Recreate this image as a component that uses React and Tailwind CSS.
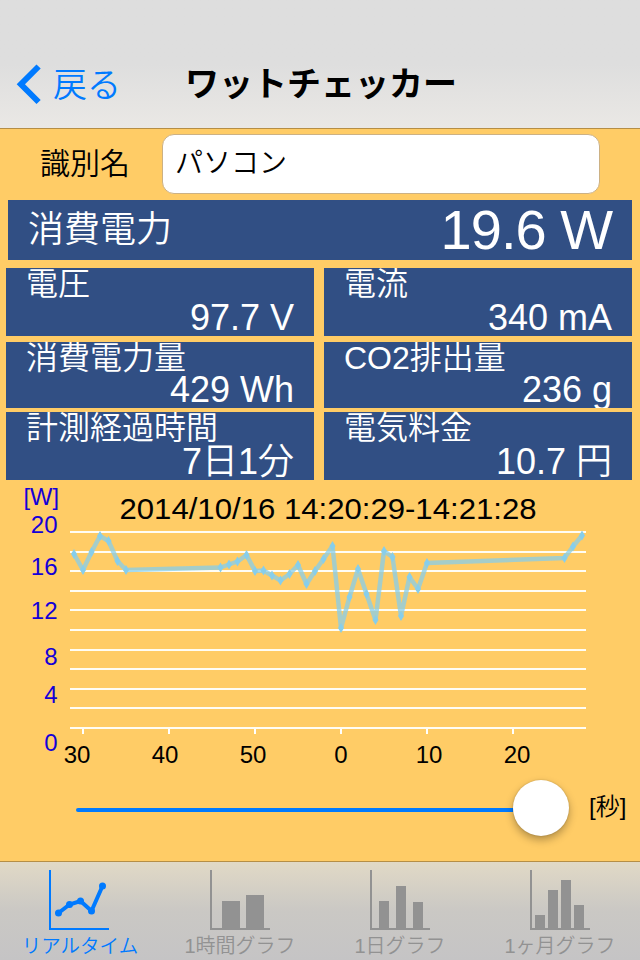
const readings = [
  [74, 554], [83, 570], [91.5, 552], [100, 536], [108.5, 541], [117.5, 561], [126, 570],
  [220.5, 567.5], [229, 564.5], [237.5, 561.5], [246.5, 555], [255, 571], [263.5, 570.5],
  [272, 575.5], [280.5, 580.5], [289.5, 574], [298, 565], [306.5, 584], [315, 571],
  [323.5, 559], [332.5, 546], [341, 628], [349.5, 597], [358, 569], [366.5, 594],
  [375.5, 620], [384, 551], [392.5, 557], [401, 616], [409.5, 577], [418, 589],
  [427, 563], [564.5, 558], [573, 546.5], [582, 535.5],
];

const yLabels = [['20', 533], ['16', 575], ['12', 619], ['8', 665], ['4', 703], ['0', 751]];
const xLabels = [['30', 77, 83], ['40', 165, 169], ['50', 253, 255], ['0', 341, 341], ['10', 429, 427], ['20', 517, 513]];

const metrics = [
  { label: '電圧', value: '97.7 V', box: 'h-[68px]' },
  { label: '電流', value: '340 mA', box: 'h-[68px]' },
  { label: '消費電力量', value: '429 Wh', box: 'h-[66px]', tight: true },
  { label: 'CO2排出量', value: '236 g', box: 'h-[66px] overflow-hidden', tight: true },
  { label: '計測経過時間', value: '7日1分', box: 'h-[68px]' },
  { label: '電気料金', value: '10.7 円', box: 'h-[68px]' },
];

const tabs = [
  { label: '1時間グラフ', bars: [[12, 31, 18], [36, 25, 18]] },
  { label: '1日グラフ', bars: [[9, 31, 10], [26, 16, 10], [43, 32, 10]] },
  { label: '1ヶ月グラフ', bars: [[5, 45, 10], [18, 20, 10], [31, 10, 10], [44, 35, 10]] },
];

function Metric({ label, value, box, tight }) {
  return (
    <div className={`${box} bg-[#314f84] px-[20px] text-white`}>
      <div className={`${tight ? 'h-[30px]' : 'h-8'} text-[32px] leading-[33px] font-[350] whitespace-nowrap`}>{label}</div>
      <div className="h-9 text-right text-[36px] leading-9 font-[350] whitespace-nowrap">{value}</div>
    </div>
  );
}

function PowerChart() {
  const points = readings.map((p) => p.join(',')).join(' ');
  return (
    <svg className="block h-[294px] w-full shrink-0" viewBox="0 480 640 294">
      <text x="23.500" y="505" fontSize="24" textLength="35.500" lengthAdjust="spacingAndGlyphs" fill="#1400d8">[W]</text>
      <text x="119.500" y="519" fontSize="30" textLength="417" lengthAdjust="spacingAndGlyphs" fill="#000">
        2014/10/16 14:20:29-14:21:28
      </text>
      {Array.from({ length: 11 }, (_, i) => (
        <rect key={i} x="70" y={531 + Math.round(i * 19.6)} width="516" height="2" fill="#fffdf5" />
      ))}
      {xLabels.map(([text, x, tick]) => (
        <g key={tick}>
          <rect x={tick - 1} y="729" width="2" height="5" fill="#fff" />
          <text x={x} y="763" fontSize="24" textAnchor="middle" fill="#000">{text}</text>
        </g>
      ))}
      {yLabels.map(([text, y]) => (
        <text key={text} x="57.500" y={y} fontSize="24" textAnchor="end" fill="#1400d8">{text}</text>
      ))}
      <polyline points={points} fill="none" stroke="#87ceeb" strokeOpacity="0.75" strokeWidth="4.500" strokeLinejoin="bevel" />
      {readings.map(([x, y]) => (
        <path key={x} d={`M${x} ${y - 5} L${x + 3} ${y} L${x} ${y + 5} L${x - 3} ${y} Z`} fill="#87ceeb" />
      ))}
    </svg>
  );
}

export default function App() {
  return (
    <div className="flex h-[960px] w-[640px] flex-col overflow-hidden bg-[#ffcc66] font-['Liberation_Sans','Noto_Sans_CJK_JP',sans-serif]">
      <header className="grid h-[129px] shrink-0 grid-cols-[185px_1fr_185px] border-b border-[#b58e46] bg-linear-to-b from-[#dedede] from-50% to-[#eae8e5] pt-[40px]">
        <button className="flex items-center pl-[16px] text-[#007aff]">
          <svg className="h-[42px] w-[26px]" viewBox="0 0 26 42">
            <path d="M0.700 21.300 L20.500 1.500 L24.700 5.500 L9 21.300 L24.700 37 L20.500 41 Z" fill="currentColor" />
          </svg>
          <span className="ml-[11px] pt-[2px] text-[34px] leading-[40px] font-[350] whitespace-nowrap">戻る</span>
        </button>
        <h1 className="text-center text-[34px] leading-[88px] font-bold whitespace-nowrap">ワットチェッカー</h1>
      </header>

      <div className="flex h-[71px] shrink-0 pt-[5px]">
        <label className="w-[162px] shrink-0 pl-[40px] text-[30px] leading-[59px] font-[350]">識別名</label>
        <div className="h-[60px] w-[438px] rounded-xl border border-[#ccb184] bg-white pl-[12px] text-[28px] leading-[58px] font-[350]">パソコン</div>
      </div>

      <div className="mx-2 flex h-[60px] shrink-0 items-center justify-between bg-[#314f84] px-[20px] text-white">
        <span className="text-[36px] leading-[60px] font-[350]">消費電力</span>
        <span className="text-[56px] leading-[60px] tracking-[-1px]">19.6 W</span>
      </div>

      <div className="mt-2 grid h-[212px] shrink-0 grid-cols-[308px_308px] grid-rows-[74px_70px_68px] gap-x-[10px] px-[6px]">
        {metrics.map((m) => (
          <Metric key={m.label} {...m} />
        ))}
      </div>

      <PowerChart />

      <div className="flex h-[87px] shrink-0 items-start pt-[6px] pl-[76px]">
        <div className="mt-[28px] h-1 w-[437px] rounded-l-full bg-[#007aff]" />
        <div className="size-14 rounded-full bg-white shadow-[0_4px_8px_rgba(0,0,0,0.3),0_0_2px_rgba(0,0,0,0.2)]" />
        <span className="ml-[20px] text-[24px] leading-[54px] font-[350] whitespace-nowrap">[秒]</span>
      </div>

      <nav className="grid h-[99px] shrink-0 grid-cols-4 border-t border-[#b58e46] bg-linear-to-b from-[#e1d9c6] via-[#cac8c4] via-50% to-[#c5c4c5] text-[#929292]">
        <button className="flex flex-col items-center pt-2 pr-[2px] text-[#007aff]">
          <svg className="h-[60px] w-[60px]" viewBox="0 0 60 60">
            <path d="M1 0 V59 H60" fill="none" stroke="currentColor" strokeWidth="2" />
            <polyline points="9.500,43 20.500,34.500 31.500,31 42.500,41 53.500,16" fill="none" stroke="currentColor" strokeWidth="4" />
            {[[9.5, 43], [20.5, 34.5], [31.5, 31], [42.5, 41], [53.5, 16]].map(([x, y]) => (
              <circle key={x} cx={x} cy={y} r="3.500" fill="currentColor" />
            ))}
          </svg>
          <span className="pl-[2px] text-[19.500px] leading-[32px] font-[350] whitespace-nowrap">リアルタイム</span>
        </button>
        {tabs.map((tab) => (
          <button key={tab.label} className="flex flex-col items-center pt-2">
            <svg className="h-[60px] w-[60px]" viewBox="0 0 60 60">
              <path d="M1 0 V59 H60" fill="none" stroke="currentColor" strokeWidth="2" />
              {tab.bars.map(([x, y, w]) => (
                <rect key={x} x={x} y={y} width={w} height={59 - y} fill="currentColor" />
              ))}
            </svg>
            <span className="text-[20px] leading-[32px] font-[350] whitespace-nowrap">{tab.label}</span>
          </button>
        ))}
      </nav>
    </div>
  );
}
